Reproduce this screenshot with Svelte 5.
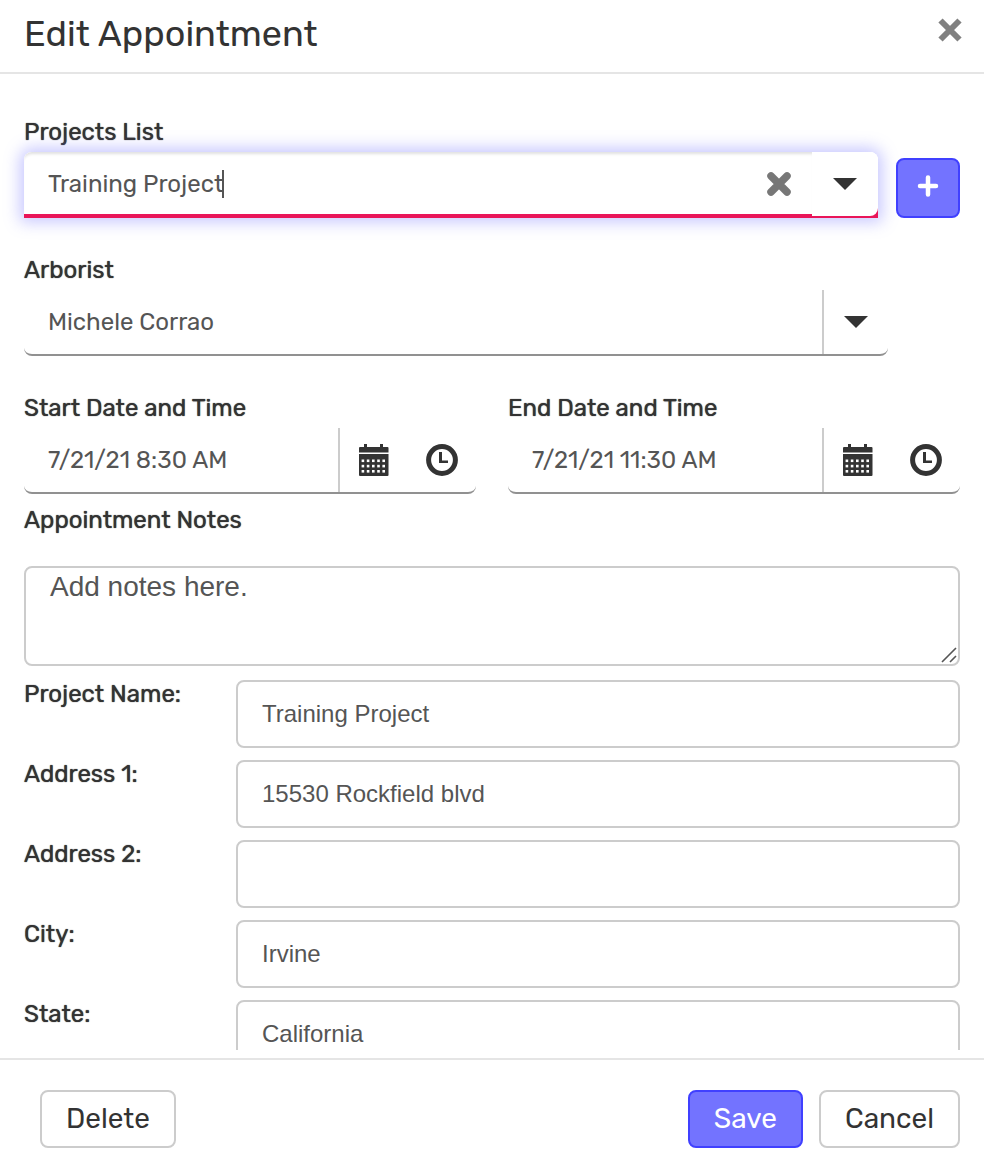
<script lang="ts">
  import { onMount } from 'svelte';

  const arborists = ['Michele Corrao'];

  let project = $state('Training Project');
  let arborist = $state('Michele Corrao');
  let notes = $state('Add notes here.');
  let caretX = $state(0);
  let projectInput: HTMLInputElement;

  let dates = $state([
    { id: 'start', label: 'Start Date and Time', value: '7/21/21 8:30 AM' },
    { id: 'end', label: 'End Date and Time', value: '7/21/21 11:30 AM' }
  ]);

  let details = $state([
    { id: 'name', label: 'Project Name:', value: 'Training Project' },
    { id: 'address1', label: 'Address 1:', value: '15530 Rockfield blvd' },
    { id: 'address2', label: 'Address 2:', value: '' },
    { id: 'city', label: 'City:', value: 'Irvine' },
    { id: 'state', label: 'State:', value: 'California' }
  ]);

  const dots = [15.5, 20.8, 26].flatMap((y) => [2.6, 7.8, 13, 18.2, 23.4].map((x) => ({ x, y })));

  // put the text cursor behind the last letter
  function placeCaret() {
    const style = getComputedStyle(projectInput);
    const ctx = document.createElement('canvas').getContext('2d');
    ctx.font = `${style.fontWeight} ${style.fontSize} ${style.fontFamily}`;
    caretX = Math.floor(parseFloat(style.paddingLeft) + ctx.measureText(project).width) - 1;
  }

  function clearProject() {
    project = '';
    projectInput.focus();
    placeCaret();
  }

  onMount(placeCaret);
</script>

{#snippet arrow()}
  <svg width="24" height="12" viewBox="0 0 24 12" aria-hidden="true">
    <path d="M0 0h24L12 12z" fill="#333" />
  </svg>
{/snippet}

<div class="dialog" role="dialog" aria-labelledby="dialog-title">
  <header class="dialog-header">
    <h1 id="dialog-title">Edit Appointment</h1>
    <button class="icon-button close" aria-label="Close">
      <svg width="24" height="24" viewBox="0 0 24 24">
        <path d="M2.5 2.5l19 19M21.5 2.5l-19 19" stroke="#808080" stroke-width="6" />
      </svg>
    </button>
  </header>

  <main class="dialog-body">
    <div class="field">
      <label for="project">Projects List</label>
      <div class="project-row">
        <div class="combo">
          <div class="combo-input">
            <input id="project" type="text" bind:value={project} bind:this={projectInput} oninput={placeCaret} />
            <span class="caret" style="left: {caretX}px"></span>
            <button class="icon-button clear" aria-label="Clear" onclick={clearProject}>
              <svg width="24" height="24" viewBox="0 0 24 24">
                <path d="M4 4l16 16M20 4L4 20" stroke="#777" stroke-width="7.5" stroke-linecap="round" />
              </svg>
            </button>
          </div>
          <button class="icon-button combo-arrow" aria-label="Open projects">
            {@render arrow()}
          </button>
        </div>
        <button class="btn primary add" aria-label="Add project">
          <svg width="22" height="22" viewBox="0 0 22 22">
            <path d="M11 2.5v17M3 11h16" stroke="#fff" stroke-width="4.5" stroke-linecap="round" />
          </svg>
        </button>
      </div>
    </div>

    <div class="field">
      <label for="arborist">Arborist</label>
      <div class="line-box select-box">
        <select id="arborist" bind:value={arborist}>
          {#each arborists as name}
            <option value={name}>{name}</option>
          {/each}
        </select>
        <span class="select-arrow">{@render arrow()}</span>
      </div>
    </div>

    <div class="dates">
      {#each dates as date (date.id)}
        <div class="date">
          <label for={date.id}>{date.label}</label>
          <div class="line-box">
            <input id={date.id} type="text" bind:value={date.value} />
            <div class="pickers">
              <button class="icon-button" aria-label="Pick date">
                <svg width="30" height="32" viewBox="0 0 30 32" fill="#333">
                  <path d="M5 0h3v3h13V0h3v3h4.500q1 0 1 1v4.500H0V4q0-1 1-1h4z" />
                  <path d="M0 10h29.500v21q0 1-1 1H1q-1 0-1-1z" />
                  {#each dots as dot}
                    <rect x={dot.x} y={dot.y} width="2.600" height="2.600" fill="#fff" />
                  {/each}
                </svg>
              </button>
              <button class="icon-button" aria-label="Pick time">
                <svg width="32" height="32" viewBox="0 0 32 32">
                  <circle cx="16" cy="16" r="13.4" fill="none" stroke="#333" stroke-width="5" />
                  <path d="M13 8h3v8.5h6V19h-9z" fill="#333" />
                </svg>
              </button>
            </div>
          </div>
        </div>
      {/each}
    </div>

    <label for="notes">Appointment Notes</label>
    <div class="notes">
      <textarea id="notes" bind:value={notes}></textarea>
      <svg class="grip" width="16" height="16" viewBox="0 0 16 16" aria-hidden="true">
        <path d="M1 15L15 1M9 15l6-6" stroke="#555" stroke-width="1.6" />
      </svg>
    </div>

    <div class="details">
      {#each details as item (item.id)}
        <div class="detail">
          <label for={item.id}>{item.label}</label>
          <input id={item.id} type="text" bind:value={item.value} />
        </div>
      {/each}
    </div>
  </main>

  <footer class="dialog-footer">
    <button class="btn delete">Delete</button>
    <button class="btn primary">Save</button>
    <button class="btn">Cancel</button>
  </footer>
</div>

<style>
  :global(body) {
    margin: 0;
    background: #fff;
  }

  .dialog,
  .dialog * {
    box-sizing: border-box;
  }

  .dialog {
    display: flex;
    flex-direction: column;
    height: 100vh;
    color: #333;
    font-family: Rubik, Roboto, sans-serif;
    font-size: 24px;
  }

  .dialog-header {
    display: flex;
    align-items: flex-start;
    justify-content: space-between;
    padding: 12px 22px 16px 24px;
    border-bottom: 2px solid #e5e5e5;
  }

  h1 {
    margin: 0;
    font-size: 36px;
    font-weight: 400;
    line-height: 44px;
  }

  .icon-button {
    display: flex;
    align-items: center;
    justify-content: center;
    padding: 0;
    border: none;
    background: none;
    cursor: pointer;
  }

  .close {
    padding-top: 6px;
  }

  .dialog-body {
    flex: 1;
    min-height: 0;
    margin-bottom: 8px;
    padding: 38px 24px 0;
    overflow-y: auto;
    scrollbar-width: none;
  }

  label {
    display: block;
    font-size: 24px;
    font-weight: 400;
    line-height: 40px;
    text-shadow: 0 0 1px #333;
  }

  input,
  select {
    flex: 1;
    min-width: 0;
    height: 64px;
    padding: 0 24px;
    border: none;
    outline: none;
    background: transparent;
    color: #555;
    font: inherit;
  }

  .field {
    margin-bottom: 32px;
  }

  .project-row {
    display: flex;
    align-items: flex-end;
    gap: 18px;
  }

  .combo {
    display: flex;
    flex: 1;
    padding-bottom: 2px;
    border-radius: 8px 8px 0 0;
    background: linear-gradient(#fff 50%, #e91559 50%);
    box-shadow: 0 0 16px 4px rgba(115, 115, 255, 0.4);
  }

  .combo-input {
    position: relative;
    display: flex;
    flex: 1;
    padding-top: 2px;
    border-bottom: 2px solid #e91559;
    border-radius: 8px 0 0 0;
    background: #fff;
    box-shadow: inset 0 4px 3px -2px rgba(0, 0, 0, 0.12);
  }

  .combo-input input {
    height: 60px;
    caret-color: transparent;
  }

  .caret {
    position: absolute;
    top: 18px;
    width: 2px;
    height: 28px;
    background: #555;
  }

  .clear {
    width: 66px;
  }

  .combo-arrow {
    width: 66px;
    border-radius: 0 8px 8px 0;
    background: #fff;
  }

  .line-box {
    display: flex;
    border-bottom: 2px solid #919191;
    border-radius: 8px;
  }

  .select-box {
    display: grid;
    margin-right: 72px;
  }

  .select-box select,
  .select-arrow {
    grid-area: 1 / 1;
  }

  .select-box select {
    appearance: none;
  }

  .select-arrow {
    display: flex;
    align-items: center;
    justify-content: center;
    justify-self: end;
    width: 66px;
    border-left: 2px solid #ccc;
    pointer-events: none;
  }

  .dates {
    display: grid;
    grid-template-columns: repeat(2, minmax(0, 1fr));
    gap: 32px;
    margin-bottom: 6px;
  }

  .pickers {
    display: flex;
    border-left: 2px solid #ccc;
  }

  .pickers .icon-button {
    width: 68px;
  }

  .notes {
    position: relative;
    margin: 26px 0 14px;
  }

  textarea {
    display: block;
    width: 100%;
    height: 100px;
    padding: 3px 24px;
    border: 2px solid #ccc;
    border-radius: 8px;
    outline: none;
    color: #555;
    font-family: "Liberation Sans", Arial, sans-serif;
    font-size: 28px;
    line-height: 32px;
    resize: vertical;
  }

  textarea::-webkit-resizer {
    display: none;
  }

  .grip {
    position: absolute;
    right: 3px;
    bottom: 3px;
    pointer-events: none;
  }

  .details {
    display: flex;
    flex-direction: column;
    gap: 12px;
  }

  .detail {
    display: flex;
  }

  .detail label {
    width: 212px;
    line-height: 28px;
  }

  .detail input {
    height: 68px;
    border: 2px solid #ccc;
    border-radius: 8px;
    font-family: "Liberation Sans", Arial, sans-serif;
  }

  .dialog-footer {
    display: flex;
    gap: 16px;
    padding: 30px 24px 12px 40px;
    border-top: 2px solid #e5e5e5;
  }

  .btn {
    height: 58px;
    padding: 0 24px 2px;
    border: 2px solid #ccc;
    border-radius: 8px;
    background: #fff;
    color: #333;
    font-family: inherit;
    font-size: 28px;
    cursor: pointer;
  }

  .primary {
    border-color: #4040ff;
    background: #7373ff;
    color: #fff;
  }

  .add {
    display: flex;
    align-items: center;
    justify-content: center;
    width: 64px;
    height: 60px;
    padding: 0 0 4px;
  }

  .delete {
    margin-right: auto;
  }
</style>
